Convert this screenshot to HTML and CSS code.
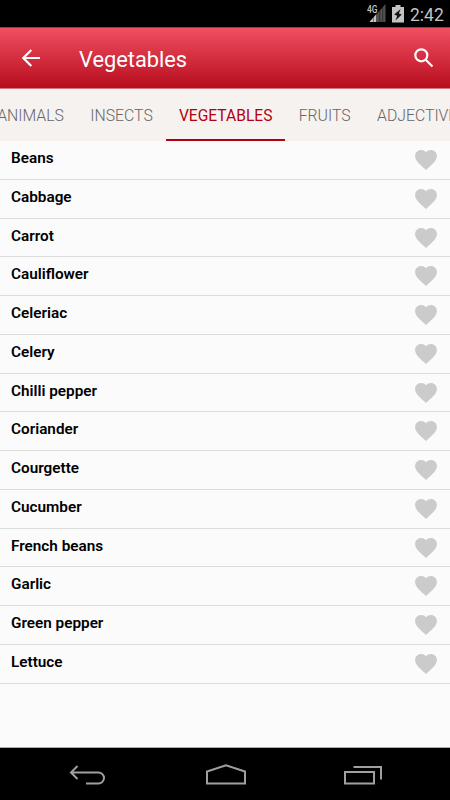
FILE: index.html
```html
<!DOCTYPE html>
<html lang="en">
<head>
    <meta charset="UTF-8">
    <meta name="viewport" content="width=device-width, initial-scale=1.0">
    <title>Vegetables</title>
    <link rel="stylesheet" href="styles.css">
</head>
<body>
    <svg width="0" height="0" class="defs">
        <symbol id="heart" viewBox="2 3 20 18.35">
            <path d="M12 21.35l-1.45-1.32C5.4 15.36 2 12.28 2 8.5 2 5.42 4.42 3 7.5 3c1.74 0 3.41.81 4.5 2.09C13.09 3.81 14.76 3 16.5 3 19.58 3 22 5.42 22 8.5c0 3.78-3.4 6.86-8.55 11.54L12 21.35z"/>
        </symbol>
    </svg>

    <div class="status-bar">
        <svg class="signal" width="20" height="19" viewBox="0 0 20 19">
            <path d="M18.500 0V18H2.500z" fill="#505050"/>
            <path d="M9.500 10.100V18H2.500z" fill="#c4c4c4"/>
            <path d="M6.500 8v11M9.500 8v11M12.700 4v15M15.700 2v17" stroke="#000" stroke-width=".4"/>
            <text x="0" y="9" textLength="10.500" lengthAdjust="spacingAndGlyphs">4G</text>
        </svg>
        <svg class="battery" width="12" height="18" viewBox="0 0 12 18">
            <path d="M3.500 0h5v2H12v15.500H0V2h3.500z" fill="#c4c4c4"/>
            <path d="M8.700 4L2.200 9.500l3 1.200L3.500 15.500 9.800 9.500 6.800 8.500z" fill="#111"/>
        </svg>
        <span class="clock">2:42</span>
    </div>

    <header class="toolbar">
        <svg class="back" width="18" height="18" viewBox="0 0 18 18">
            <path d="M18 9H1.500M9.300 1L1.300 9l8 8"/>
        </svg>
        <h1>Vegetables</h1>
        <svg class="search" width="20" height="20" viewBox="0 0 20 20">
            <circle cx="7.300" cy="7.300" r="6"/>
            <path d="M11.700 11.700l6.800 6.800"/>
        </svg>
    </header>

    <nav class="tabs">
        <a class="tab">Animals</a>
        <a class="tab">Insects</a>
        <a class="tab active">Vegetables</a>
        <a class="tab">Fruits</a>
        <a class="tab">Adjectives</a>
    </nav>

    <ul class="list">
        <li><span>Beans</span><svg class="heart"><use href="#heart"/></svg></li>
        <li><span>Cabbage</span><svg class="heart"><use href="#heart"/></svg></li>
        <li><span>Carrot</span><svg class="heart"><use href="#heart"/></svg></li>
        <li><span>Cauliflower</span><svg class="heart"><use href="#heart"/></svg></li>
        <li><span>Celeriac</span><svg class="heart"><use href="#heart"/></svg></li>
        <li><span>Celery</span><svg class="heart"><use href="#heart"/></svg></li>
        <li><span>Chilli pepper</span><svg class="heart"><use href="#heart"/></svg></li>
        <li><span>Coriander</span><svg class="heart"><use href="#heart"/></svg></li>
        <li><span>Courgette</span><svg class="heart"><use href="#heart"/></svg></li>
        <li><span>Cucumber</span><svg class="heart"><use href="#heart"/></svg></li>
        <li><span>French beans</span><svg class="heart"><use href="#heart"/></svg></li>
        <li><span>Garlic</span><svg class="heart"><use href="#heart"/></svg></li>
        <li><span>Green pepper</span><svg class="heart"><use href="#heart"/></svg></li>
        <li><span>Lettuce</span><svg class="heart"><use href="#heart"/></svg></li>
    </ul>

    <footer class="nav-bar">
        <svg width="38" height="22" viewBox="0 0 38 22">
            <path d="M2 8.500h27.500a5.500 5.500 0 0 1 0 11H17M8.500 2L2 8.500l6.500 6.500"/>
        </svg>
        <svg width="42" height="22" viewBox="0 0 42 22">
            <path d="M2 19.500V7.500L21 1.200 40 7.500v12z"/>
        </svg>
        <svg width="38" height="22" viewBox="0 0 38 22">
            <path d="M1 8h29v11.500H1zM9.500 3H37v12.500"/>
        </svg>
    </footer>
</body>
</html>
```
FILE: styles.css
```css
* {
    box-sizing: border-box;
}
body {
    margin: 0;
    height: 800px;
    display: flex;
    flex-direction: column;
    overflow: hidden;
    background: #fbfbfb;
    font-family: Roboto, sans-serif;
}
.defs {
    position: absolute;
}
.status-bar {
    flex: none;
    height: 27px;
    padding-right: 7px;
    display: flex;
    justify-content: flex-end;
    background: #000;
}
.signal {
    margin-top: 4px;
}
.signal text {
    font-size: 10px;
    font-weight: 500;
    fill: #c4c4c4;
    stroke: #000;
    stroke-width: 1px;
    paint-order: stroke;
}
.battery {
    margin: 5px 6px 0 5px;
}
.clock {
    width: 33px;
    font-size: 17.5px;
    line-height: 30px;
    color: #c4c4c4;
}
.toolbar {
    flex: none;
    height: 62px;
    padding: 0 16px 0 22px;
    display: flex;
    align-items: center;
    background: linear-gradient(#f04f62, #b70d1d);
    border-top: 1px solid #a83440;
    border-bottom: 1px solid #d0777d;
}
.toolbar svg {
    fill: none;
    stroke: #fff;
    stroke-width: 2.2;
}
.toolbar h1 {
    flex: 1;
    margin: 2px 0 0 39px;
    font-size: 21.8px;
    font-weight: 400;
    color: #fff;
}
.tabs {
    flex: none;
    height: 52px;
    display: flex;
    overflow: hidden;
    background: #f6f2ef;
}
.tab {
    flex: none;
    height: 52px;
    padding: 0 13.2px;
    font-size: 15.8px;
    font-weight: 300;
    line-height: 54px;
    text-transform: uppercase;
    color: #666;
}
/* strip is scrolled so the active tab sits near the middle */
.tab:first-child {
    margin-left: -16px;
}
.tab.active {
    padding: 0 13px;
    font-size: 15.6px;
    font-weight: 400;
    color: #b3000f;
    border-bottom: 2px solid #b3000f;
}
.list {
    flex: 1;
    margin: 0;
    padding: 0;
    list-style: none;
}
.list li {
    height: 38.75px;
    padding: 0 13px 0 11px;
    display: flex;
    justify-content: space-between;
    border-bottom: 1px solid #dcdcdc;
}
.list span {
    font-size: 15.3px;
    font-weight: 600;
    line-height: 34px;
    color: #000;
}
.heart {
    width: 22px;
    height: 20px;
    margin-top: 9px;
    fill: #cbcbcb;
}
.nav-bar {
    flex: none;
    height: 53px;
    padding: 2px 68px 0 69px;
    display: flex;
    align-items: center;
    justify-content: space-between;
    background: #000;
    border-top: 1px solid #aaa;
}
.nav-bar svg {
    fill: none;
    stroke: #a0a0a0;
    stroke-width: 2;
}
```
